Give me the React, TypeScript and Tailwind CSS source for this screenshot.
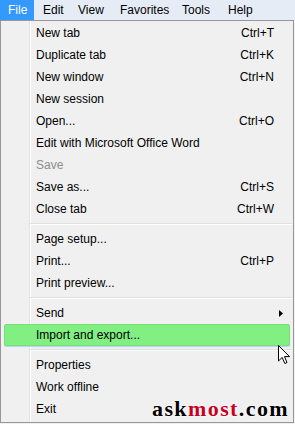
import React from "react";

type Item =
  | { type: "item"; label: string; shortcut?: string; disabled?: boolean; sub?: boolean; hl?: boolean }
  | { type: "sep" };

const items: Item[] = [
  { type: "item", label: "New tab", shortcut: "Ctrl+T" },
  { type: "item", label: "Duplicate tab", shortcut: "Ctrl+K" },
  { type: "item", label: "New window", shortcut: "Ctrl+N" },
  { type: "item", label: "New session" },
  { type: "item", label: "Open...", shortcut: "Ctrl+O" },
  { type: "item", label: "Edit with Microsoft Office Word" },
  { type: "item", label: "Save", disabled: true },
  { type: "item", label: "Save as...", shortcut: "Ctrl+S" },
  { type: "item", label: "Close tab", shortcut: "Ctrl+W" },
  { type: "sep" },
  { type: "item", label: "Page setup..." },
  { type: "item", label: "Print...", shortcut: "Ctrl+P" },
  { type: "item", label: "Print preview..." },
  { type: "sep" },
  { type: "item", label: "Send", sub: true },
  { type: "item", label: "Import and export...", hl: true },
  { type: "sep" },
  { type: "item", label: "Properties" },
  { type: "item", label: "Work offline" },
  { type: "item", label: "Exit" },
];

export default function App() {
  return (
    <div
      className="relative w-[295px] h-[424px] overflow-hidden bg-[#f0f0f0] text-[12px] text-black"
      style={{ fontFamily: '"Liberation Sans", Arial, sans-serif' }}
    >
      <div className="h-[20px] bg-[#e6ecf6] flex items-stretch">
        <div className="w-[34px] bg-[#3399ff] text-white flex items-center pl-[8px]">File</div>
        <div className="w-[44px] flex items-center pl-[9px]">Edit</div>
        <div className="w-[42px] flex items-center">View</div>
        <div className="w-[62px] flex items-center">Favorites</div>
        <div className="w-[46px] flex items-center">Tools</div>
        <div className="flex items-center">Help</div>
      </div>
      <div className="relative h-[403px] border border-[#979797] py-[1px] mr-[1px]">
        <div className="absolute left-[28px] top-0 bottom-0 w-[2px] border-l border-[#e2e3e3] bg-white" />
        {items.map((it, i) =>
          it.type === "sep" ? (
            <div key={i} className="relative h-[8px] pl-[29px] pr-[1px] flex items-center">
              <div className="w-full h-[2px] border-t border-[#e0e0e0] bg-white" />
            </div>
          ) : it.hl ? (
            <div key={i} className="relative h-[22px] px-[3px] flex items-stretch">
              <div className="flex-1 flex items-center pl-[31px] bg-[#82ef82] border border-[#79e079] rounded-[2px] shadow-[0_1px_0_#b9d3f5]">
                {it.label}
              </div>
            </div>
          ) : (
            <div
              key={i}
              className={`relative h-[22px] flex items-center pl-[35px] pr-[19px] ${it.disabled ? "text-[#8d8d8d]" : "text-black"}`}
            >
              <span className="flex-1">{it.label}</span>
              {it.shortcut && <span>{it.shortcut}</span>}
              {it.sub && (
                <svg width="4" height="7" viewBox="0 0 4 7" className="mr-[-9px]">
                  <path d="M0 0 L4 3.5 L0 7 Z" fill="#000" />
                </svg>
              )}
            </div>
          )
        )}
      </div>
      <svg
        className="absolute left-[278px] top-[345px]"
        width="13"
        height="20"
        viewBox="0 0 13 20"
      >
        <path
          d="M0.5 0.5 L0.5 16 L4.2 12.4 L6.8 18.5 L9 17.5 L6.5 11.6 L11.5 11.6 Z"
          fill="#fff"
          stroke="#000"
          strokeWidth="1"
          strokeLinejoin="miter"
        />
      </svg>
      <div
        className="absolute left-[152px] top-[398px] text-[22px] font-bold tracking-[1.4px] leading-none [text-shadow:0_0_2px_#fff,0_0_2px_#fff,0_0_1px_#fff]"
        style={{ fontFamily: '"Liberation Serif", "Times New Roman", serif' }}
      >
        <span className="text-black">ask</span>
        <span className="text-[#c8001e]">most</span>
        <span className="text-black">.com</span>
      </div>
    </div>
  );
}
